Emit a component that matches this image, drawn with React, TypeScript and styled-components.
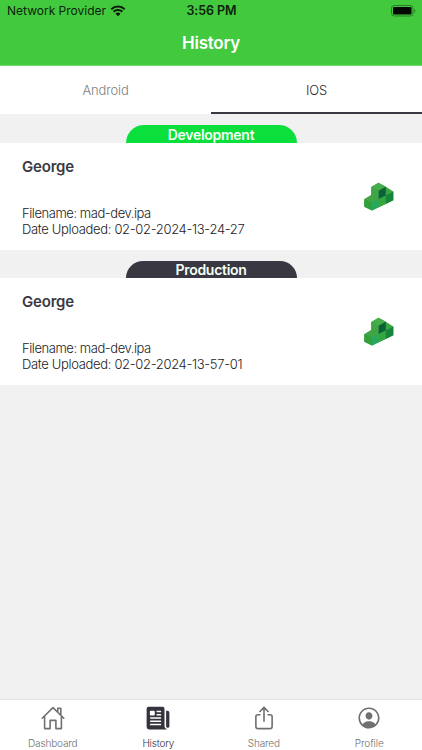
import React from 'react';
import styled, { createGlobalStyle } from 'styled-components';
import { IoNewspaper, IoPersonCircleOutline, IoShareOutline } from 'react-icons/io5';

const GlobalStyle = createGlobalStyle`
  * { box-sizing: border-box; }
  body { margin: 0; font-family: Inter, 'Liberation Sans', sans-serif; }
`;

const Screen = styled.div`
  display: flex;
  flex-direction: column;
  width: 422px;
  height: 750px;
  overflow: hidden;
  background: #f1f1f1;
`;

const Header = styled.header`
  flex: none;
  height: 66px;
  background: #43c93e;
  border-bottom: 1px solid #74d770;
`;

const StatusBar = styled.div`
  display: grid;
  grid-template-columns: 1fr auto 1fr;
  align-items: center;
  height: 22px;
  padding: 0 6px 0 7px;
  color: #0b1f0a;
`;

const Label = styled.span<{ $size: number; $weight?: number; $spacing?: number; $color?: string }>`
  display: block;
  white-space: nowrap;
  line-height: 16px;
  font-size: ${(p) => p.$size}px;
  font-weight: ${(p) => p.$weight ?? 400};
  letter-spacing: ${(p) => p.$spacing ?? 0}px;
  color: ${(p) => p.$color ?? 'inherit'};
`;

const Carrier = styled.div`
  display: flex;
  align-items: center;
  gap: 4px;
`;

const BatterySlot = styled.div`
  display: flex;
  justify-content: flex-end;
`;

const Title = styled.h1`
  margin: 0;
  height: 42px;
  display: flex;
  align-items: center;
  justify-content: center;
  color: #fff;
`;

const Tabs = styled.nav`
  flex: none;
  display: grid;
  grid-template-columns: 1fr 1fr;
  height: 48px;
  background: #fff;
`;

const Tab = styled.button<{ $active?: boolean }>`
  display: flex;
  align-items: center;
  justify-content: center;
  padding: 2px 0 0;
  border: 0;
  border-bottom: 2px solid ${(p) => (p.$active ? '#3a3843' : '#fff')};
  background: none;
  font-family: inherit;
  color: ${(p) => (p.$active ? '#2a2a2e' : '#808080')};
`;

const Content = styled.main`
  flex: 1;
`;

const Section = styled.section`
  padding-top: 11px;
`;

const Badge = styled.div<{ $color: string; $height: number }>`
  display: flex;
  align-items: center;
  justify-content: center;
  width: 171px;
  height: ${(p) => p.$height}px;
  margin: 0 auto;
  padding-top: 1px;
  border-radius: 18px 18px 0 0;
  background: ${(p) => p.$color};
  color: #f5fff6;
`;

const Card = styled.article`
  display: flex;
  justify-content: space-between;
  align-items: center;
  height: 107px;
  padding: 0 28px 0 22px;
  background: #fff;
  color: #3a3942;
`;

const Details = styled.div`
  display: flex;
  flex-direction: column;
  height: 100%;
  padding-top: 16px;
`;

const FileInfo = styled.div`
  margin-top: 30px;
  color: #222226;
`;

const BottomBar = styled.nav`
  flex: none;
  display: grid;
  grid-template-columns: repeat(4, 1fr);
  height: 51px;
  border-top: 1px solid #e4e4e4;
  background: #fff;
`;

const BottomItem = styled.button<{ $active?: boolean }>`
  display: flex;
  flex-direction: column;
  align-items: center;
  padding: 5px 0 0;
  border: 0;
  background: none;
  font-family: inherit;
  color: ${(p) => (p.$active ? '#35333e' : '#707070')};

  svg { flex: none; }
  span { margin-top: 4px; }
`;

const WifiIcon = () => (
  <svg width="16" height="12" viewBox="0 0 15 12" fill="none" stroke="#0a1a09" strokeWidth="2">
    <path d="M.8 4.2a9.7 9.7 0 0 1 13.4 0M3.1 6.7a6.4 6.4 0 0 1 8.8 0" />
    <path d="M7.5 11.3 5 8.8a3.6 3.6 0 0 1 5 0Z" fill="#0a1a09" stroke="none" />
  </svg>
);

const BatteryIcon = () => (
  <svg width="25" height="12" viewBox="0 0 25 12">
    <rect x=".5" y=".5" width="21.5" height="10.5" rx="2.8" fill="none" stroke="#267f24" />
    <rect x="2" y="2" width="18.5" height="7.5" rx="1.3" fill="#020702" />
    <path d="M23.2 4v3.8c1.6-.5 1.6-3.3 0-3.8Z" fill="#267f24" />
  </svg>
);

const BlocksLogo = () => (
  <svg width="30" height="30" viewBox="0 0 30 30">
    <path d="M14.5.8 21.8 4.8 29.3 9.6V18.2L8 28.6.3 24.8V17.2L7.3 13V5Z" fill="#3ba544" />
    <path d="M7.3 5 14.5.8l7.3 4L14.7 8.8Z" fill="#45ad4a" />
    <path d="M7.3 5l7.4 3.8V17L8 20.5.3 17.2 7.3 13Z" fill="#40a546" />
    <path d="M.3 17.2 8 20.5v8.1L.3 24.8Z" fill="#31a03b" />
    <path d="m8 20.5 6.7-3.5v8.3L8 28.6Z" fill="#27a85e" />
    <path d="m14.7 8.8 7.1-4v8.8L14.7 17Z" fill="#086236" />
    <path d="m14.7 17 7.1-3.4v8.3l-7.1 3.4Z" fill="#33a63d" />
    <path d="m21.8 13.6 7.5-4v8.6l-7.5 3.7Z" fill="#16853b" />
  </svg>
);

const HomeIcon = () => (
  <svg width="26" height="26" viewBox="0 0 26 26" fill="none" stroke="currentColor" strokeWidth="1.6" strokeLinejoin="round" strokeLinecap="round">
    <path d="M2.2 13.2 13 2.6l10.8 10.6M4.6 11.5v12.1h5.5v-8.2h5.8v8.2h5.5V11.5M17.8 7V3.2h3v6.5" />
  </svg>
);

const uploads = [
  { stage: 'Development', color: '#0bdf3c', height: 18, spacing: -0.28, owner: 'George', file: 'mad-dev.ipa', date: '02-02-2024-13-24-27' },
  { stage: 'Production', color: '#393842', height: 17, spacing: -0.3, owner: 'George', file: 'mad-dev.ipa', date: '02-02-2024-13-57-01' },
];

export default function App() {
  return (
    <>
      <GlobalStyle />
      <Screen>
        <Header>
          <StatusBar>
            <Carrier>
              <Label $size={12}>Network Provider</Label>
              <WifiIcon />
            </Carrier>
            <Label $size={12.5} $weight={600} $spacing={-0.08}>3:56 PM</Label>
            <BatterySlot><BatteryIcon /></BatterySlot>
          </StatusBar>
          <Title><Label $size={17} $weight={600} $spacing={-0.25}>History</Label></Title>
        </Header>
        <Tabs>
          <Tab><Label $size={13} $weight={300} $spacing={-0.15}>Android</Label></Tab>
          <Tab $active><Label $size={13} $weight={300} $spacing={-0.1}>IOS</Label></Tab>
        </Tabs>
        <Content>
          {uploads.map((u) => (
            <Section key={u.stage}>
              <Badge $color={u.color} $height={u.height}>
                <Label $size={14} $weight={600} $spacing={u.spacing}>{u.stage}</Label>
              </Badge>
              <Card>
                <Details>
                  <Label $size={15} $weight={600} $spacing={-0.2}>{u.owner}</Label>
                  <FileInfo>
                    <Label $size={13} $weight={300} $spacing={-0.44}>Filename: {u.file}</Label>
                    <Label $size={13} $weight={300} $spacing={-0.33}>Date Uploaded: {u.date}</Label>
                  </FileInfo>
                </Details>
                <BlocksLogo />
              </Card>
            </Section>
          ))}
        </Content>
        <BottomBar>
          <BottomItem><HomeIcon /><Label $size={10} $weight={300} $spacing={-0.15}>Dashboard</Label></BottomItem>
          <BottomItem $active><IoNewspaper size={26} /><Label $size={10} $weight={300} $spacing={-0.2}>History</Label></BottomItem>
          <BottomItem><IoShareOutline size={26} /><Label $size={10} $weight={300} $spacing={-0.15}>Shared</Label></BottomItem>
          <BottomItem><IoPersonCircleOutline size={26} /><Label $size={10} $weight={300} $spacing={-0.1}>Profile</Label></BottomItem>
        </BottomBar>
      </Screen>
    </>
  );
}
